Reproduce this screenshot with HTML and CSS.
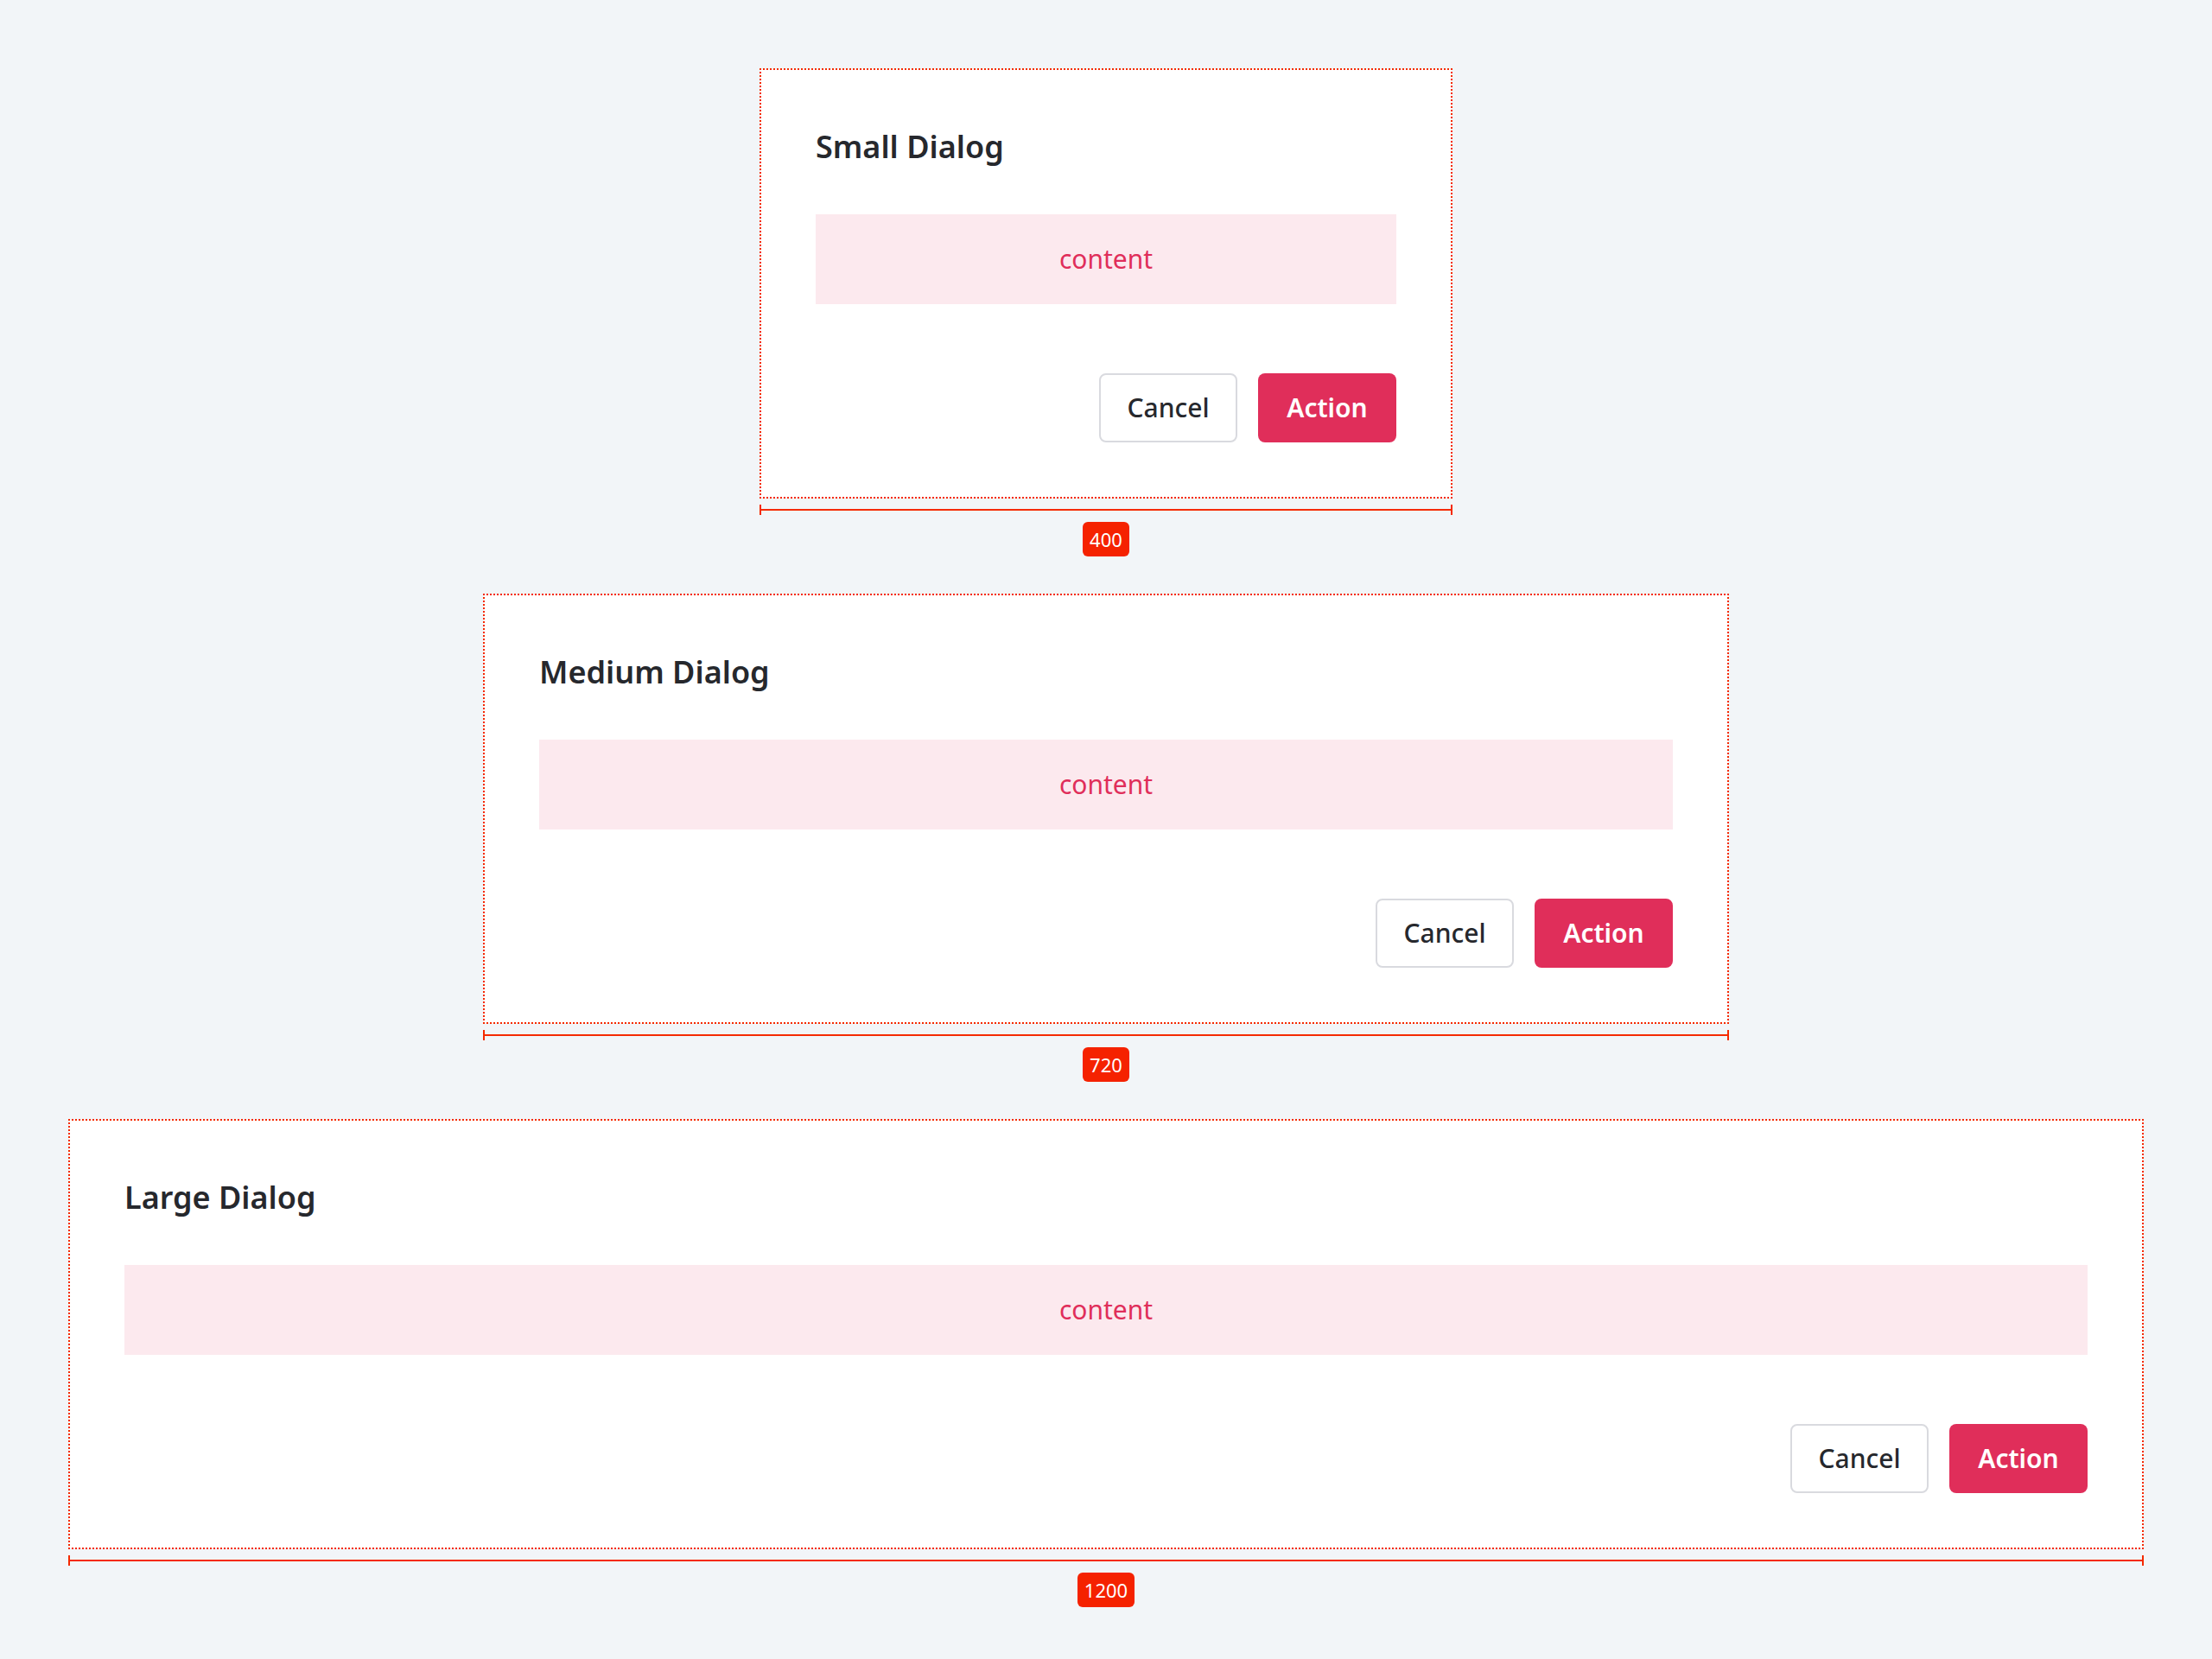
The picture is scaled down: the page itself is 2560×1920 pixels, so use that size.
FILE: index.html
```html
<!DOCTYPE html>
<html lang="en">
<head>
    <meta charset="UTF-8">
    <meta name="viewport" content="width=device-width, initial-scale=1.0">
    <title>Dialog Sizes</title>
    <link rel="stylesheet" href="styles.css">
</head>
<body>

    <main class="page">

        <!-- Small -->
        <section class="spec spec-sm">
            <div class="dialog">
                <h2 class="dialog-title">Small Dialog</h2>
                <div class="dialog-content">content</div>
                <div class="dialog-actions">
                    <button class="btn btn-secondary">Cancel</button>
                    <button class="btn btn-primary">Action</button>
                </div>
            </div>
            <div class="ruler"></div>
            <span class="ruler-label">400</span>
        </section>

        <!-- Medium -->
        <section class="spec spec-md">
            <div class="dialog">
                <h2 class="dialog-title">Medium Dialog</h2>
                <div class="dialog-content">content</div>
                <div class="dialog-actions">
                    <button class="btn btn-secondary">Cancel</button>
                    <button class="btn btn-primary">Action</button>
                </div>
            </div>
            <div class="ruler"></div>
            <span class="ruler-label">720</span>
        </section>

        <!-- Large -->
        <section class="spec spec-lg">
            <div class="dialog">
                <h2 class="dialog-title">Large Dialog</h2>
                <div class="dialog-content">content</div>
                <div class="dialog-actions">
                    <button class="btn btn-secondary">Cancel</button>
                    <button class="btn btn-primary">Action</button>
                </div>
            </div>
            <div class="ruler"></div>
            <span class="ruler-label">1200</span>
        </section>

    </main>

</body>
</html>
```

FILE: styles.css
```css
body {
    margin: 0;
    background-color: #f2f5f8;
    font-family: "Noto Sans", "Open Sans", Arial, sans-serif;
    color: #26282d;
}
.page {
    display: flex;
    flex-direction: column;
    align-items: center;
    gap: 44px;
    padding: 80px 0;
}
.spec {
    display: flex;
    flex-direction: column;
    align-items: center;
}
.spec-sm {
    width: 800px;
}
.spec-md {
    width: 1440px;
}
.spec-lg {
    width: 2400px;
}
.dialog {
    align-self: stretch;
    box-sizing: border-box;
    padding: 64px;
    background-color: #fff;
    outline: 2px dotted #f52a00;
    outline-offset: -1px;
}
.dialog-title {
    margin: 0 0 52px;
    font-size: 36px;
    line-height: 52px;
    font-weight: 600;
    color: #26282d;
}
.dialog-content {
    height: 104px;
    display: flex;
    align-items: center;
    justify-content: center;
    background-color: #fce9ee;
    color: #e02e5a;
    font-size: 30px;
    line-height: 40px;
}
.dialog-actions {
    display: flex;
    justify-content: flex-end;
    gap: 24px;
    margin-top: 80px;
}
.btn {
    width: 160px;
    height: 80px;
    box-sizing: border-box;
    border-radius: 8px;
    font-family: inherit;
    font-size: 30px;
    line-height: 40px;
    cursor: pointer;
}
.btn-secondary {
    background-color: #fff;
    border: 2px solid #d9dadf;
    color: #26282d;
    font-weight: 500;
}
.btn-primary {
    background-color: #e02e5a;
    border: none;
    color: #fff;
    font-weight: 600;
}
.ruler {
    align-self: stretch;
    height: 12px;
    margin: 8px -1px 0;
    border-left: 2px solid #f52a00;
    border-right: 2px solid #f52a00;
    background: linear-gradient(#f52a00, #f52a00) center / 100% 2px no-repeat;
}
.ruler-label {
    margin-top: 8px;
    padding: 0 8px;
    height: 40px;
    border-radius: 6px;
    background-color: #f52200;
    color: #fff;
    font-size: 22px;
    line-height: 40px;
}
```
